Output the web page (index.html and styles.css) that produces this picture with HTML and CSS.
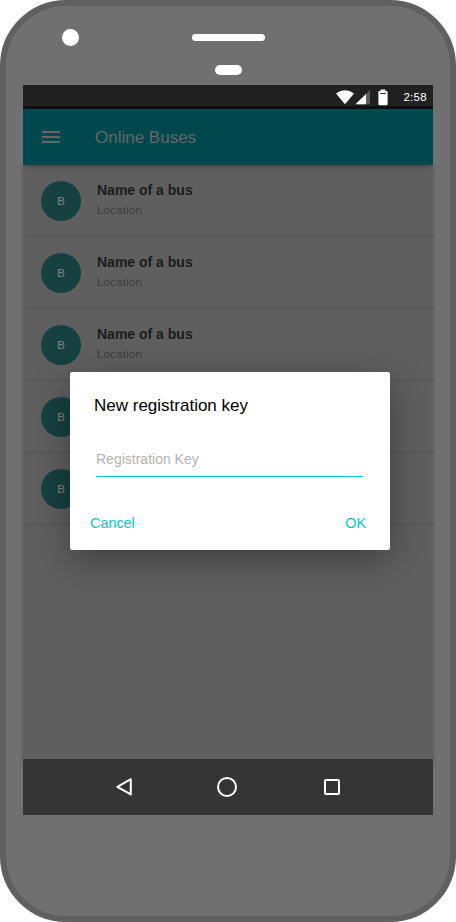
FILE: index.html
```html
<!DOCTYPE html>
<html lang="en">
<head>
<meta charset="utf-8">
<title>Online Buses</title>
<link rel="stylesheet" href="styles.css">
</head>
<body>
<div class="phone">
  <div class="bezel">
    <span class="camera"></span>
    <span class="speaker"></span>
    <span class="sensor"></span>
  </div>
  <main class="screen">
    <div class="status">
      <svg width="52" height="16" viewBox="0 0 52 16">
        <path d="M0 3.6Q9-3.2 18 3.6L9 14.3Z" fill="#fff"/>
        <path d="M34 0V14.3H19.5Z" fill="#5c5c5c"/>
        <path d="M30 4V14.3H19.5Z" fill="#fff"/>
        <path d="M44.6 1V-.6h4.8V1h1q1.2 0 1.2 1.2v11.8q0 1.2-1.2 1.2h-6.8q-1.2 0-1.2-1.2V2.2q0-1.2 1.2-1.2Z" fill="#fff"/>
        <path d="M44 3.5h6" stroke="#333" stroke-width="1"/>
      </svg>
      <span class="time">2:58</span>
    </div>
    <header class="toolbar">
      <span class="menu"><i></i><i></i><i></i></span>
      <h1>Online Buses</h1>
    </header>
    <ul class="list">
      <li><span class="avatar">B</span><div><b>Name of a bus</b><small>Location</small></div></li>
      <li><span class="avatar">B</span><div><b>Name of a bus</b><small>Location</small></div></li>
      <li><span class="avatar">B</span><div><b>Name of a bus</b><small>Location</small></div></li>
      <li><span class="avatar">B</span></li>
      <li><span class="avatar">B</span></li>
    </ul>
    <nav class="navbar">
      <svg width="410" height="56" viewBox="0 0 410 56" fill="none" stroke="#fff" stroke-width="2">
        <path d="M107.8 20.2V35.4L94.3 27.8Z" stroke-linejoin="round"/>
        <circle cx="204" cy="28" r="9"/>
        <rect x="302" y="21" width="14" height="14" rx=".8"/>
      </svg>
    </nav>
  </main>
  <section class="dialog">
    <h2>New registration key</h2>
    <div class="field">Registration Key</div>
    <div class="actions"><span>Cancel</span><span>OK</span></div>
  </section>
</div>
</body>
</html>
```

FILE: styles.css
```css
* { box-sizing: border-box; }
body { margin: 0; background: #fff; font-family: "Liberation Sans", Arial, sans-serif; }
.phone {
  position: relative;
  width: 456px;
  height: 922px;
  padding: 0 17px;
  border: 6px solid #606060;
  border-radius: 66px;
  background: #707070;
}
.bezel { position: relative; height: 79px; }
.bezel span { position: absolute; background: #fff; border-radius: 9px; }
.bezel .camera { left: 39px; top: 23px; width: 17px; height: 17px; }
.bezel .speaker { left: 169px; top: 28px; width: 73px; height: 7px; border-radius: 4px; }
.bezel .sensor { left: 192px; top: 59px; width: 27px; height: 10px; border-radius: 5px; }
.screen { width: 410px; height: 730px; display: flex; flex-direction: column; }
.status {
  height: 24px;
  flex: none;
  padding: 5px 6px 0 0;
  display: flex;
  justify-content: flex-end;
  background: #212121;
  border-bottom: 3px solid #0e0e0e;
}
.status svg { overflow: visible; }
.time { width: 39px; text-align: right; color: #fff; font-size: 11.5px; letter-spacing: .3px; line-height: 14px; }
.toolbar {
  position: relative;
  z-index: 1;
  height: 56px;
  flex: none;
  padding-left: 19px;
  display: flex;
  align-items: center;
  background: #00474e;
  color: #666;
  box-shadow: 0 1px 5px rgba(0, 0, 0, .35);
  clip-path: inset(0 0 -10px 0);
}
.menu { width: 53px; display: grid; gap: 3px; }
.menu i { width: 18px; height: 2px; background: #666; }
h1 { margin: 0; padding-top: 2px; font-size: 17px; font-weight: 400; }
.list {
  flex: 1;
  margin: 0;
  padding: 0;
  list-style: none;
  background: #5f5f5f;
  box-shadow: 0 0 3px 1px rgba(80, 80, 80, .35);
}
.list li {
  width: 410px;
  height: 72px;
  margin-left: 2px;
  padding: 16px 0 0 16px;
  display: flex;
  gap: 16px;
  border-bottom: 1px solid #525252;
}
.avatar {
  width: 40px;
  height: 40px;
  border-radius: 50%;
  background: #174141;
  color: #858585;
  font-size: 11.5px;
  line-height: 40px;
  text-align: center;
}
b { display: block; color: #1c1c1c; font-size: 14px; line-height: 18px; }
small { display: block; margin-top: 4px; color: #3d3d3d; font-size: 11.5px; letter-spacing: .2px; line-height: 14px; }
.navbar { height: 56px; background: #353535; position: relative; }
.dialog {
  position: absolute;
  left: 64px;
  top: 366px;
  width: 320px;
  height: 178px;
  padding: 24px 20px 0;
  border-radius: 2px;
  background: #fff;
  box-shadow: 0 10px 36px rgba(0, 0, 0, .35);
}
h2 { margin: 0 4px; font-size: 17px; line-height: 20px; font-weight: 400; color: #000; }
.field {
  width: 267px;
  height: 27px;
  margin: 34px 0 0 6px;
  border-bottom: 1px solid #0cc;
  color: #b2b2b2;
  font-size: 14px;
  line-height: 18px;
}
.actions {
  margin-top: 37px;
  padding-right: 4px;
  display: flex;
  justify-content: space-between;
  color: #0cc;
  font-size: 14.4px;
  line-height: 18px;
}
```
